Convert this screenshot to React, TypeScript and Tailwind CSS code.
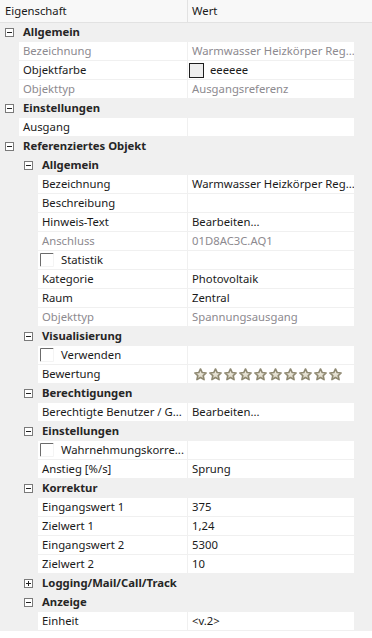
import React from 'react';

type Row =
  | { kind: 'cat'; level: 0 | 1; label: string; collapsed?: boolean }
  | {
      kind: 'prop';
      level: 1 | 2;
      name: string;
      value?: string;
      readonly?: boolean;
      swatch?: boolean;
      checkbox?: boolean;
      stars?: boolean;
    };

const rows: Row[] = [
  { kind: 'cat', level: 0, label: 'Allgemein' },
  { kind: 'prop', level: 1, name: 'Bezeichnung', value: 'Warmwasser Heizkörper Reg...', readonly: true },
  { kind: 'prop', level: 1, name: 'Objektfarbe', value: 'eeeeee', swatch: true },
  { kind: 'prop', level: 1, name: 'Objekttyp', value: 'Ausgangsreferenz', readonly: true },
  { kind: 'cat', level: 0, label: 'Einstellungen' },
  { kind: 'prop', level: 1, name: 'Ausgang' },
  { kind: 'cat', level: 0, label: 'Referenziertes Objekt' },
  { kind: 'cat', level: 1, label: 'Allgemein' },
  { kind: 'prop', level: 2, name: 'Bezeichnung', value: 'Warmwasser Heizkörper Reg...' },
  { kind: 'prop', level: 2, name: 'Beschreibung' },
  { kind: 'prop', level: 2, name: 'Hinweis-Text', value: 'Bearbeiten...' },
  { kind: 'prop', level: 2, name: 'Anschluss', value: '01D8AC3C.AQ1', readonly: true },
  { kind: 'prop', level: 2, name: 'Statistik', checkbox: true },
  { kind: 'prop', level: 2, name: 'Kategorie', value: 'Photovoltaik' },
  { kind: 'prop', level: 2, name: 'Raum', value: 'Zentral' },
  { kind: 'prop', level: 2, name: 'Objekttyp', value: 'Spannungsausgang', readonly: true },
  { kind: 'cat', level: 1, label: 'Visualisierung' },
  { kind: 'prop', level: 2, name: 'Verwenden', checkbox: true },
  { kind: 'prop', level: 2, name: 'Bewertung', stars: true },
  { kind: 'cat', level: 1, label: 'Berechtigungen' },
  { kind: 'prop', level: 2, name: 'Berechtigte Benutzer / G...', value: 'Bearbeiten...' },
  { kind: 'cat', level: 1, label: 'Einstellungen' },
  { kind: 'prop', level: 2, name: 'Wahrnehmungskorre...', checkbox: true },
  { kind: 'prop', level: 2, name: 'Anstieg [%/s]', value: 'Sprung' },
  { kind: 'cat', level: 1, label: 'Korrektur' },
  { kind: 'prop', level: 2, name: 'Eingangswert 1', value: '375' },
  { kind: 'prop', level: 2, name: 'Zielwert 1', value: '1,24' },
  { kind: 'prop', level: 2, name: 'Eingangswert 2', value: '5300' },
  { kind: 'prop', level: 2, name: 'Zielwert 2', value: '10' },
  { kind: 'cat', level: 1, label: 'Logging/Mail/Call/Track', collapsed: true },
  { kind: 'cat', level: 1, label: 'Anzeige' },
  { kind: 'prop', level: 2, name: 'Einheit', value: '<v.2>' },
];

const ExpandBox = ({ collapsed }: { collapsed?: boolean }) => (
  <svg width="9" height="9" viewBox="0 0 9 9" className="shrink-0">
    <rect x="0.5" y="0.5" width="8" height="8" fill="#fff" stroke="#7a7a7a" />
    <line x1="2" y1="4.5" x2="7" y2="4.5" stroke="#222" />
    {collapsed && <line x1="4.5" y1="2" x2="4.5" y2="7" stroke="#222" />}
  </svg>
);

const CheckBox = () => (
  <svg width="14" height="14" viewBox="0 0 14 14" className="shrink-0">
    <path d="M0.5 13.5 V0.5 H13.5" fill="none" stroke="#6b6b6b" />
    <path d="M13.5 0.5 V13.5 H0.5" fill="none" stroke="#f4f4f4" />
  </svg>
);

const Star = () => (
  <svg width="13" height="13" viewBox="0 0 24 24" className="shrink-0">
    <defs>
      <linearGradient id="sg" x1="0" y1="0" x2="0" y2="1">
        <stop offset="0" stopColor="#f6f4ec" />
        <stop offset="1" stopColor="#d6d0bd" />
      </linearGradient>
    </defs>
    <path
      d="M12 1.8 L15.2 8.4 L22.4 9.2 L17 14.1 L18.6 21.4 L12 17.6 L5.4 21.4 L7 14.1 L1.6 9.2 L8.8 8.4 Z"
      fill="url(#sg)"
      stroke="#8f8972"
      strokeWidth="3"
      strokeLinejoin="round"
    />
  </svg>
);

const PropRow = ({ row }: { row: Extract<Row, { kind: 'prop' }> }) => {
  const indent = row.level === 1 ? 'pl-[19px]' : 'pl-[38px]';
  const tone = row.readonly ? 'text-[#8d8a8f]' : 'text-[#1a1a1a]';
  return (
    <div className="flex h-[18px]">
      <div className={`w-[187px] shrink-0 ${indent}`}>
        <div className={`h-full bg-white overflow-hidden whitespace-nowrap ${row.checkbox ? 'flex items-center pl-[2px]' : 'pl-[4px]'}`}>
          {row.checkbox ? (
            <>
              <CheckBox />
              <span className="ml-[7px] text-[#1a1a1a]">{row.name}</span>
            </>
          ) : (
            <span className={tone}>{row.name}</span>
          )}
        </div>
      </div>
      <div className="ml-[1px] w-[166px] shrink-0 bg-white overflow-hidden whitespace-nowrap">
        {row.swatch ? (
          <div className="flex items-center h-full pl-[1px]">
            <div className="w-[15px] h-[15px] border border-[#1e1e1e] bg-[#eeeeee]" />
            <span className="ml-[6px] text-[#1a1a1a]">{row.value}</span>
          </div>
        ) : row.stars ? (
          <div className="flex items-center h-full pl-[6px] gap-[2px]">
            {Array.from({ length: 10 }).map((_, i) => (
              <Star key={i} />
            ))}
          </div>
        ) : (
          <span className={`pl-[4px] ${tone}`}>{row.value}</span>
        )}
      </div>
    </div>
  );
};

const CatRow = ({ row }: { row: Extract<Row, { kind: 'cat' }> }) => (
  <div className={`flex items-center h-[18px] ${row.level === 0 ? 'pl-[5px]' : 'pl-[24px]'}`}>
    <ExpandBox collapsed={row.collapsed} />
    <span className="ml-[9px] font-bold text-[#262626] whitespace-nowrap">{row.label}</span>
  </div>
);

export default function App() {
  return (
    <div
      className="w-[372px] h-[638px] bg-white text-[11.3px] leading-[18px] overflow-hidden"
      style={{ fontFamily: '"Noto Sans", "Open Sans", sans-serif' }}
    >
      <div className="flex h-[23px] bg-[#f8f8f8] border-b border-[#e2e2e2]">
        <div className="w-[188px] border-r border-[#e2e2e2] pl-[5px] flex items-center text-[#1a1a1a]">Eigenschaft</div>
        <div className="pl-[4px] flex items-center text-[#1a1a1a]">Wert</div>
      </div>
      <div className="flex flex-col gap-[1px] bg-[#f0f0f0] pb-[1px]">
        {rows.map((r, i) =>
          r.kind === 'cat' ? <CatRow key={i} row={r} /> : <PropRow key={i} row={r} />
        )}
      </div>
    </div>
  );
}
